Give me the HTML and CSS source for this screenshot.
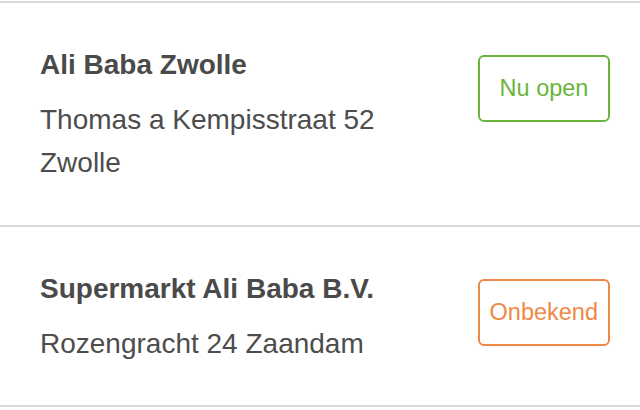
FILE: index.html
```html
<!DOCTYPE html>
<html lang="nl">
<head>
<meta charset="utf-8">
<title>Winkels</title>
<link rel="stylesheet" href="styles.css">
</head>
<body>
<ul class="stores">
  <li class="store">
    <div class="info">
      <h2 class="name">Ali Baba Zwolle</h2>
      <p class="addr">Thomas a Kempisstraat 52 Zwolle</p>
    </div>
    <span class="badge badge-open">Nu open</span>
  </li>
  <li class="store">
    <div class="info">
      <h2 class="name">Supermarkt Ali Baba B.V.</h2>
      <p class="addr">Rozengracht 24 Zaandam</p>
    </div>
    <span class="badge badge-unknown">Onbekend</span>
  </li>
</ul>
</body>
</html>
```
FILE: styles.css
```css
html, body {
  margin: 0;
  padding: 0;
  background: #ffffff;
}

body {
  font-family: "Liberation Sans", Arial, Helvetica, sans-serif;
  color: #4a4a4a;
}

.stores {
  list-style: none;
  margin: 1px 0 0 0;
  padding: 0;
  border-top: 2px solid #d9d9d9;
}

.store {
  display: flex;
  align-items: flex-start;
  gap: 24px;
  padding: 41px 30px 41px 40px;
  border-bottom: 2px solid #d9d9d9;
}

.store + .store {
  padding-bottom: 40px;
}

.info {
  flex: 1;
  min-width: 0;
}

.name {
  margin: 0;
  font-size: 28px;
  line-height: 42px;
  font-weight: 700;
  color: #4a4a4a;
}

.addr {
  margin: 12px 0 0 0;
  font-size: 28px;
  line-height: 43px;
  font-weight: 400;
  color: #4d4d4d;
}

.badge {
  flex: none;
  box-sizing: border-box;
  min-width: 132px;
  height: 67px;
  margin-top: 11px;
  padding: 0 10px;
  border: 2px solid;
  border-radius: 6px;
  display: flex;
  align-items: center;
  justify-content: center;
  font-size: 23.5px;
  line-height: 27px;
}

.badge-open {
  color: #6ab43e;
  border-color: #6ab43e;
}

.badge-unknown {
  color: #ef8847;
  border-color: #ef8847;
}
```
